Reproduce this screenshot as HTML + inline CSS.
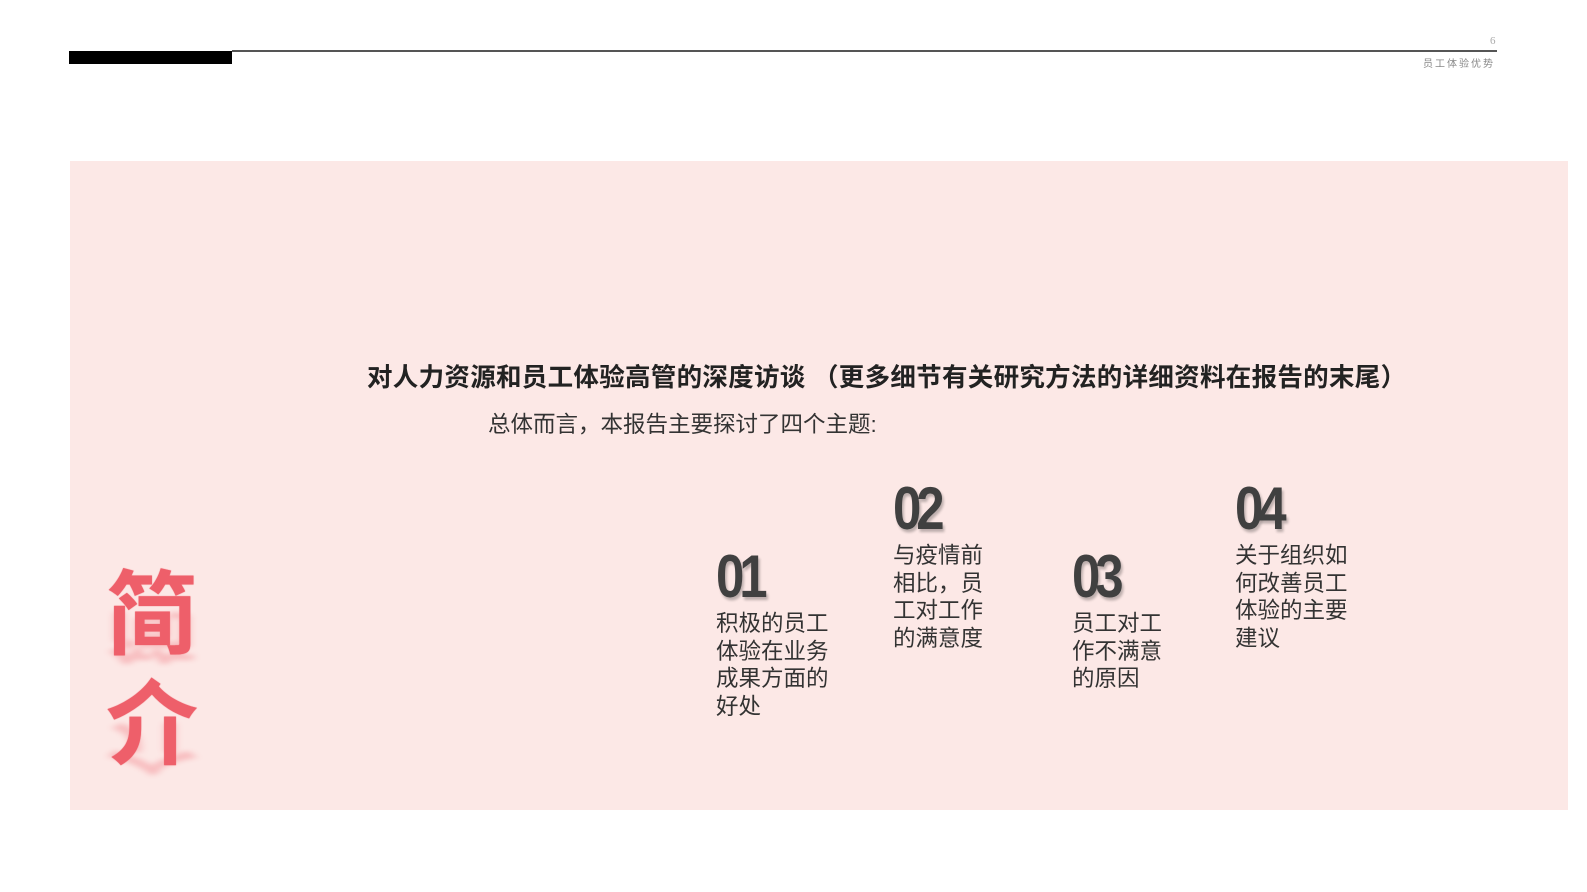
<!DOCTYPE html>
<html><head><meta charset="utf-8"><style>
html,body{margin:0;overflow:hidden;}
body{width:1587px;height:892px;background:#fff;position:relative;font-family:"Liberation Sans","Noto Sans CJK SC",sans-serif;}
.a{position:absolute;white-space:nowrap;}
.num{position:absolute;font-family:"Liberation Sans",sans-serif;font-weight:bold;font-size:60px;color:#404040;letter-spacing:-6px;transform:scaleX(0.85);transform-origin:left;text-shadow:2px 3px 3px rgba(0,0,0,0.25);line-height:1;}
.t{position:absolute;font-size:22.5px;line-height:27.5px;color:#333;}
.big{position:absolute;left:106px;font-size:92px;color:#ee5f6a;font-weight:bold;line-height:1;text-shadow:0 0 1px #ee5f6a;}
</style></head><body>
<div class="a" style="left:69px;top:51px;width:163px;height:13px;background:#000"></div>
<div class="a" style="left:232px;top:50px;width:1265px;height:2px;background:#555"></div>
<div class="a" style="left:1490px;top:35px;font-size:11px;color:#aaa;font-family:'Liberation Serif',serif">6</div>
<div class="a" style="left:1423px;top:55px;font-size:10px;color:#888;letter-spacing:2px">员工体验优势</div>
<div class="a" style="left:70px;top:161px;width:1498px;height:649px;background:#fce8e6"></div>
<div class="a" style="left:367px;top:357px;font-size:25.5px;font-weight:bold;color:#222;letter-spacing:0.3px">对人力资源和员工体验高管的深度访谈 （更多细节有关研究方法的详细资料在报告的末尾）</div>
<div class="a" style="left:488px;top:407px;font-size:22.5px;color:#333">总体而言，本报告主要探讨了四个主题:</div>
<div class="num" style="left:716px;top:547px">01</div>
<div class="t" style="left:716px;top:610px">积极的员工<br>体验在业务<br>成果方面的<br>好处</div>
<div class="num" style="left:893px;top:479px">02</div>
<div class="t" style="left:893px;top:542px">与疫情前<br>相比，员<br>工对工作<br>的满意度</div>
<div class="num" style="left:1072px;top:547px">03</div>
<div class="t" style="left:1072px;top:610px">员工对工<br>作不满意<br>的原因</div>
<div class="num" style="left:1235px;top:479px">04</div>
<div class="t" style="left:1235px;top:542px">关于组织如<br>何改善员工<br>体验的主要<br>建议</div>
<div class="big" style="top:663px;opacity:.3;filter:blur(4px);transform:scaleY(-0.6);transform-origin:top">简</div>
<div class="big" style="top:774px;opacity:.3;filter:blur(4px);transform:scaleY(-0.6);transform-origin:top">介</div>
<div class="big" style="top:570px">简</div>
<div class="big" style="top:680px">介</div>
</body></html>
